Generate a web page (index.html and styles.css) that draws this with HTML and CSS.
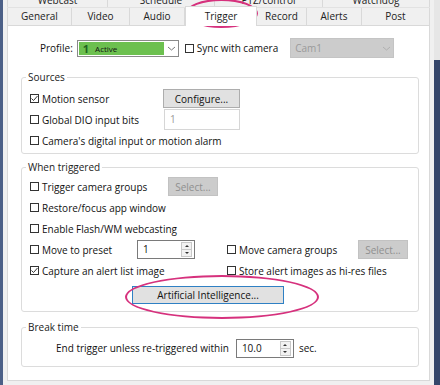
FILE: index.html
```html
<!DOCTYPE html>
<html lang="en">

<head>
  <meta charset="UTF-8">
  <title>Camera settings - Trigger</title>
  <link rel="stylesheet" href="styles.css">
</head>

<body>
  <div class="window">
    <div class="edge edge-left"></div>
    <div class="dialog">
      <!-- back row of tabs, mostly cut off at the top -->
      <div class="tabrow tabrow-back">
        <div class="tab">Webcast</div>
        <div class="tab">Schedule</div>
        <div class="tab">PTZ/control</div>
        <div class="tab">Watchdog</div>
      </div>
      <div class="tabrow tabrow-front">
        <div class="tab">General</div>
        <div class="tab">Video</div>
        <div class="tab">Audio</div>
        <div class="tab active">Trigger</div>
        <div class="tab">Record</div>
        <div class="tab">Alerts</div>
        <div class="tab">Post</div>
      </div>

      <div class="panel">
        <div class="profile-row">
          <span class="profile-label">Profile:</span>
          <div class="combo combo-profile">
            <div class="combo-value"><span class="profile-num">1</span><span class="profile-name">Active</span></div>
            <div class="combo-arrow">
              <svg width="9" height="5" viewBox="0 0 9 5"><polyline points="1,1 4.5,4 8,1" fill="none" stroke="#777" stroke-width="1"/></svg>
            </div>
          </div>
          <label class="check sync"><span class="box"></span>Sync with camera</label>
          <div class="combo combo-disabled">
            <div class="combo-value">Cam1</div>
            <div class="combo-arrow">
              <svg width="9" height="5" viewBox="0 0 9 5"><polyline points="1,1 4.5,4 8,1" fill="none" stroke="#b0b0b0" stroke-width="1"/></svg>
            </div>
          </div>
        </div>

        <fieldset class="group group-sources">
          <legend>Sources</legend>
          <div class="row">
            <label class="check lead-sources"><span class="box"><svg width="7" height="7" viewBox="0 0 7 7"><polyline points="0.5,3.5 2.5,5.5 6.5,1" fill="none" stroke="#333" stroke-width="1"/></svg></span>Motion sensor</label>
            <button class="btn btn-configure">Configure...</button>
          </div>
          <div class="row">
            <label class="check lead-sources"><span class="box"></span>Global DIO input bits</label>
            <div class="textbox">1</div>
          </div>
          <div class="row">
            <label class="check"><span class="box"></span>Camera's digital input or motion alarm</label>
          </div>
        </fieldset>

        <fieldset class="group group-trigger">
          <legend>When triggered</legend>
          <div class="row">
            <label class="check lead-groups"><span class="box"></span>Trigger camera groups</label>
            <button class="btn btn-disabled btn-select">Select...</button>
          </div>
          <div class="row">
            <label class="check"><span class="box"></span>Restore/focus app window</label>
          </div>
          <div class="row">
            <label class="check"><span class="box"></span>Enable Flash/WM webcasting</label>
          </div>
          <div class="row">
            <label class="check lead-preset"><span class="box"></span>Move to preset</label>
            <div class="spin spin-preset">
              <span class="spin-value">1</span>
              <span class="spin-buttons"><span class="spin-up"></span><span class="spin-down"></span></span>
            </div>
            <label class="check lead-right"><span class="box"></span>Move camera groups</label>
            <button class="btn btn-disabled btn-select">Select...</button>
          </div>
          <div class="row">
            <label class="check lead-capture"><span class="box"><svg width="7" height="7" viewBox="0 0 7 7"><polyline points="0.5,3.5 2.5,5.5 6.5,1" fill="none" stroke="#333" stroke-width="1"/></svg></span>Capture an alert list image</label>
            <label class="check"><span class="box"></span>Store alert images as hi-res files</label>
          </div>
          <div class="ai-row">
            <button class="btn btn-ai">Artificial Intelligence...</button>
          </div>
        </fieldset>

        <fieldset class="group group-break">
          <legend>Break time</legend>
          <div class="row break-row">
            <span>End trigger unless re-triggered within</span>
            <div class="spin spin-break">
              <span class="spin-value">10.0</span>
              <span class="spin-buttons"><span class="spin-up"></span><span class="spin-down"></span></span>
            </div>
            <span>sec.</span>
          </div>
        </fieldset>
      </div>
    </div>
    <div class="edge edge-right"></div>

    <!-- hand drawn highlight marks on top of the dialog -->
    <div class="mark mark-tab"></div>
    <div class="mark mark-ai"></div>
  </div>
</body>

</html>
```

FILE: styles.css
```css
body {
  margin: 0;
  font-family: 'Open Sans', 'Noto Sans', sans-serif;
  font-size: 10px;
  color: #111;
}

.window {
  position: relative;
  width: 440px;
  height: 385px;
  display: flex;
  background-color: #f0f0f0;
  overflow: hidden;
}

.edge-left {
  width: 3px;
  background-color: #4c6087;
}

.edge-right {
  width: 6px;
  background: linear-gradient(#e6e6e6 60px, #35466a 60px);
}

.dialog {
  flex: 1;
  padding: 0 4px;
  display: flex;
  flex-direction: column;
}

/* tabs */
.tabrow {
  display: grid;
}

.tab {
  text-align: center;
  border-right: 1px solid #d9d9d9;
  color: #222;
}

.tab:first-child {
  border-left: 1px solid #d9d9d9;
}

.tabrow-back {
  height: 8px;
  overflow: hidden;
  grid-template-columns: 101px 107px 108px 107px;
  grid-template-rows: 8px;
  align-items: end;
}

.tabrow-back .tab {
  height: 16px;
  line-height: 16px;
}

.tabrow-front {
  height: 17px;
  grid-template-columns: 65px 58px 55px 72px 50px 55px 68px;
  border-top: 1px solid #e2e2e2;
  margin-top: -1px;
}

.tabrow-front .tab {
  line-height: 16px;
}

.tab.active {
  position: relative;
  z-index: 1;
  background-color: #fff;
  border: 1px solid #d9d9d9;
  border-bottom: none;
  margin: -2px 0 -1px;
  line-height: 18px;
}

.panel {
  background-color: #fff;
  border: 1px solid #d9d9d9;
  padding: 12px 0 13px;
}

/* profile row */
.profile-row {
  display: flex;
  align-items: center;
  height: 20px;
  padding-left: 32px;
}

.profile-label {
  margin-right: 4px;
}

.combo {
  display: flex;
  box-sizing: border-box;
  border: 1px solid #8a8a8a;
}

.combo-value {
  flex: 1;
  display: flex;
  align-items: center;
}

.combo-arrow {
  width: 13px;
  display: flex;
  align-items: center;
  justify-content: center;
}

.combo-profile {
  width: 102px;
  height: 17px;
  background-color: #fff;
}

.combo-profile .combo-value {
  margin: 1px;
  background-color: #6cc04f;
  font-size: 8px;
}

.profile-num {
  margin: 0 6px 0 4px;
  color: #21641f;
  font-size: 11px;
  font-weight: bold;
  line-height: 13px;
}

.combo-disabled {
  width: 104px;
  height: 20px;
  margin-left: 12px;
  background-color: #cccccc;
  border-color: #c4c4c4;
  color: #9a9a9a;
}

.combo-disabled .combo-value {
  padding-left: 4px;
}

/* checkboxes */
.check {
  display: flex;
  align-items: center;
  white-space: nowrap;
}

.box {
  box-sizing: border-box;
  width: 9px;
  height: 9px;
  margin-right: 3px;
  border: 1px solid #333;
  background-color: #fff;
  display: flex;
  align-items: center;
  justify-content: center;
}

.sync {
  margin-left: 6px;
}

/* group boxes */
.group {
  margin: 11px 10px 0 13px;
  padding: 3px 8px 2px;
  border: 1px solid #dcdcdc;
  border-radius: 3px;
}

.group legend {
  padding: 0 2px;
  margin-left: -4px;
  line-height: 16px;
  color: #222;
}

.group-trigger {
  margin-top: 5px;
  padding-top: 1px;
  padding-bottom: 7px;
}

.group-break {
  margin-top: 7px;
  padding: 3px 8px 8px;
}

.row {
  display: flex;
  align-items: center;
  height: 21px;
}

.lead-sources {
  width: 133px;
}

.lead-groups {
  width: 138px;
}

.lead-preset {
  width: 107px;
}

.lead-right {
  width: 131px;
  margin-left: 32px;
}

.lead-capture {
  width: 197px;
}

/* buttons and inputs */
.btn {
  box-sizing: border-box;
  height: 19px;
  padding: 0;
  font-family: inherit;
  font-size: 10px;
  color: #111;
  background-color: #e1e1e1;
  border: 1px solid #adadad;
}

.btn-configure {
  width: 77px;
}

.btn-disabled {
  background-color: #cccccc;
  border-color: #c2c2c2;
  color: #8f8f8f;
}

.btn-select {
  width: 50px;
}

.textbox {
  box-sizing: border-box;
  width: 76px;
  height: 21px;
  margin-left: 1px;
  padding-left: 5px;
  line-height: 19px;
  border: 1px solid #d6d6d6;
  color: #999;
}

.ai-row {
  display: flex;
  justify-content: center;
  margin-top: 5px;
  padding-right: 24px;
}

.btn-ai {
  width: 152px;
  height: 18px;
  border-color: #2f80c4;
}

.spin {
  box-sizing: border-box;
  display: flex;
  width: 58px;
  height: 19px;
  border: 1px solid #7a7a7a;
  background-color: #fff;
}

.spin-value {
  flex: 1;
  padding-left: 5px;
  line-height: 17px;
}

.spin-buttons {
  width: 9px;
  margin: 1px 2px 1px 0;
  display: flex;
  flex-direction: column;
  border: 1px solid #c8c8c8;
  background-color: #f2f2f2;
}

.spin-up,
.spin-down {
  flex: 1;
  display: flex;
  align-items: center;
  justify-content: center;
}

.spin-up {
  border-bottom: 1px solid #c8c8c8;
}

.spin-up::after {
  content: '';
  border: 2px solid transparent;
  border-bottom-color: #333;
  border-top: none;
}

.spin-down::after {
  content: '';
  border: 2px solid transparent;
  border-top-color: #333;
  border-bottom: none;
}

.break-row {
  height: 20px;
  padding-left: 26px;
}

.spin-break {
  margin: 0 5px 0 7px;
}

/* pink highlight ellipses */
.mark {
  position: absolute;
  border: 2px solid #d6317d;
  border-radius: 50%;
}

.mark-tab {
  left: 185px;
  top: -1px;
  width: 69px;
  height: 25px;
}

.mark-ai {
  left: 125px;
  top: 275px;
  width: 190px;
  height: 40px;
}
```
